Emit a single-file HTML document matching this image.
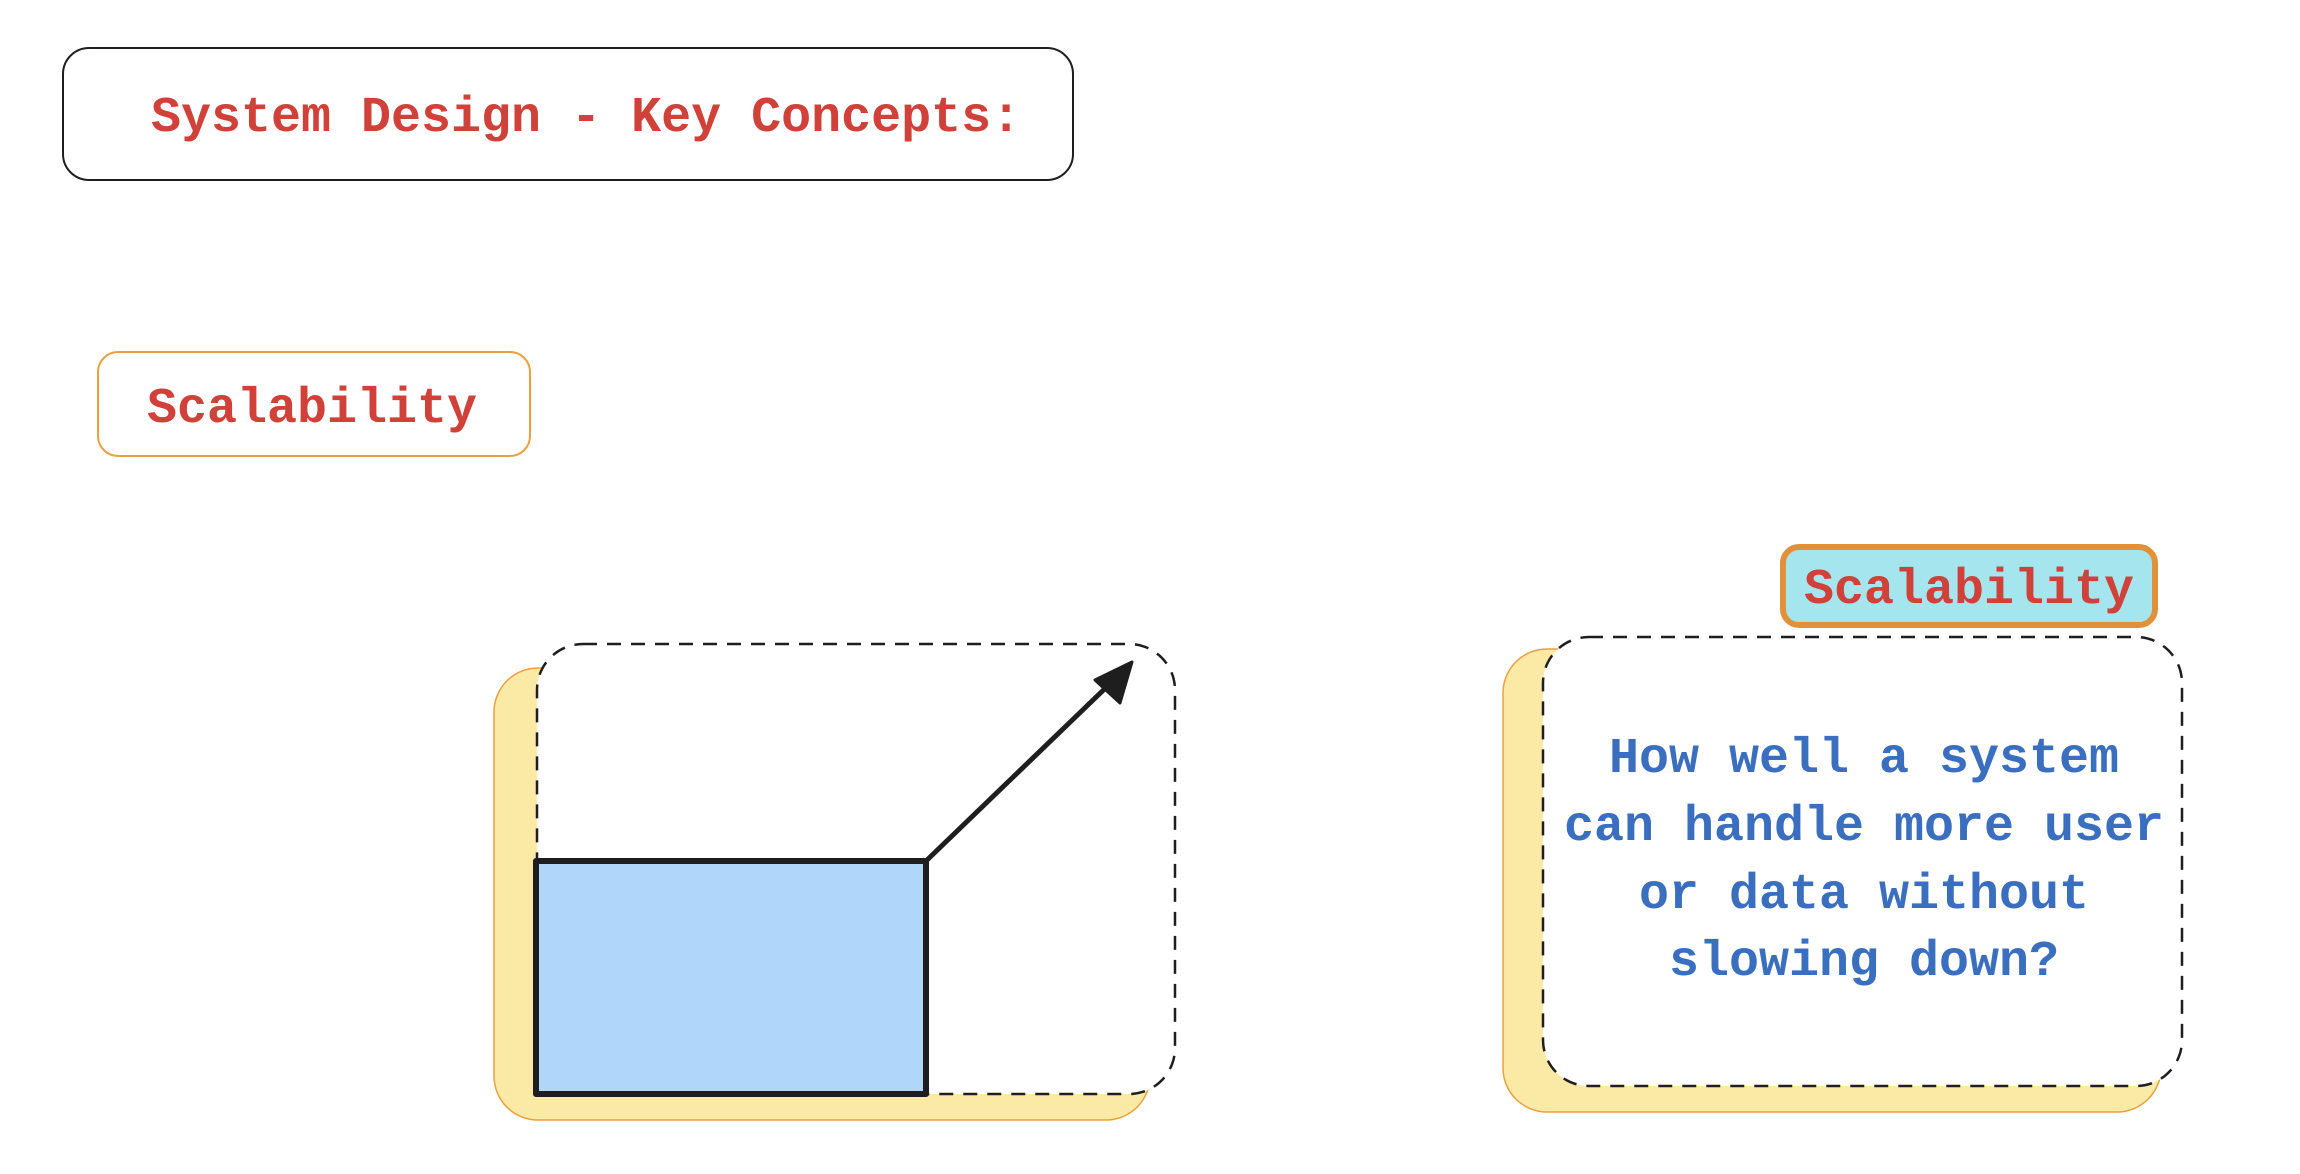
<!DOCTYPE html>
<html><head><meta charset="utf-8"><style>
html,body{margin:0;padding:0;background:#fff;width:2300px;height:1174px;overflow:hidden}
svg{display:block}
text{font-family:"Liberation Mono",monospace;font-size:50px;font-weight:bold}
</style></head><body>
<svg width="2300" height="1174" viewBox="0 0 2300 1174" xmlns="http://www.w3.org/2000/svg">
<rect x="63" y="48" width="1010" height="132" rx="26" fill="#fff" stroke="#1e1e1e" stroke-width="2"/>
<text x="151" y="131" fill="#d0413a">System Design - Key Concepts:</text>

<rect x="98" y="352" width="432" height="104" rx="20" fill="#fff" stroke="#e8a040" stroke-width="2"/>
<text x="147" y="422" fill="#d0413a">Scalability</text>

<!-- left diagram -->
<rect x="494" y="668" width="656" height="452" rx="44" fill="#fbeaa5" stroke="#e8a040" stroke-width="1.5"/>
<rect x="537" y="644" width="638" height="450" rx="46" fill="#fff" stroke="#1e1e1e" stroke-width="2.5" stroke-dasharray="14 10"/>
<rect x="536" y="861" width="390" height="233" fill="#b0d6fa" stroke="#1e1e1e" stroke-width="6" stroke-linejoin="round"/>
<line x1="926" y1="861" x2="1118" y2="676" stroke="#1e1e1e" stroke-width="5" stroke-linecap="round"/>
<path d="M1132 662 L1095 680 L1120 703 Z" fill="#1e1e1e" stroke="#1e1e1e" stroke-width="3" stroke-linejoin="round"/>

<!-- right diagram -->
<rect x="1503" y="649" width="658" height="463" rx="44" fill="#fbeaa5" stroke="#e8a040" stroke-width="1.5"/>
<rect x="1543" y="637" width="639" height="449" rx="46" fill="#fff" stroke="#1e1e1e" stroke-width="2.5" stroke-dasharray="14 10"/>
<rect x="1783" y="547" width="372" height="78" rx="16" fill="#a5e6ee" stroke="#e0913a" stroke-width="6"/>
<text x="1969" y="603" fill="#d0413a" text-anchor="middle">Scalability</text>
<g fill="#3a6fbf" text-anchor="middle">
<text x="1864" y="772">How well a system</text>
<text x="1864" y="840">can handle more user</text>
<text x="1864" y="908">or data without</text>
<text x="1864" y="975">slowing down?</text>
</g>
</svg>
</body></html>
